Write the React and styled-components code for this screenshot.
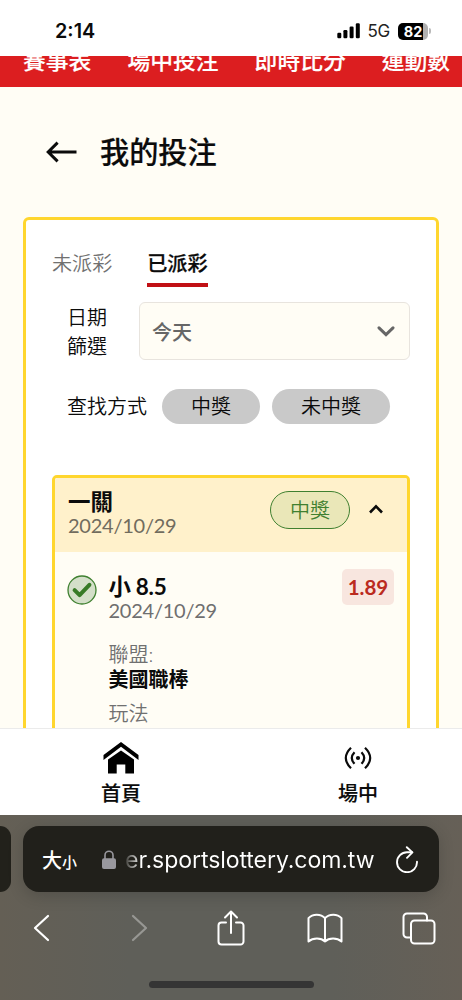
import React, { useState } from 'react';
import styled, { createGlobalStyle } from 'styled-components';

const GlobalStyle = createGlobalStyle`
  * {
    box-sizing: border-box;
  }

  body {
    margin: 0;
    background: #fffdf5;
    font-family: Lato, 'Noto Sans CJK TC', sans-serif;
    color: #0b0b0b;
  }

  button {
    font-family: inherit;
    font-weight: inherit;
    color: inherit;
    background: none;
    border: none;
    padding: 0;
    margin: 0;
  }

  svg {
    display: block;
    flex-shrink: 0;
  }
`;

const Screen = styled.div`
  display: flex;
  flex-direction: column;
  width: 462px;
  height: 1000px;
  overflow: hidden;
`;

// Phone status bar
const StatusBar = styled.header`
  display: flex;
  align-items: center;
  flex-shrink: 0;
  height: 56px;
  padding: 6px 31px 0 55px;
  background: #fff;
  font-family: Inter, sans-serif;
`;

const Clock = styled.span`
  flex: 1;
  font-size: 19.8px;
  font-weight: 600;
  line-height: 24px;
`;

const Network = styled.span`
  margin: 0 8px 0 7px;
  font-size: 17px;
  line-height: 24px;
  letter-spacing: -0.3px;
  color: #222;
`;

const Battery = styled.span`
  display: flex;
  align-items: center;
  justify-content: center;
  width: 30px;
  height: 17px;
  border-radius: 5px;
  background: linear-gradient(90deg, #000 82%, #b1b1b1 82%);
  color: #fff;
  font-size: 14.5px;
  font-weight: 700;
`;

const BatteryTip = styled.span`
  width: 2px;
  height: 6px;
  margin-left: 1px;
  border-radius: 0 2px 2px 0;
  background: #b9b9b9;
`;

// Site menu, scrolled partly under the status bar
const SiteMenu = styled.nav`
  display: flex;
  align-items: flex-end;
  flex-shrink: 0;
  gap: 36px;
  height: 31px;
  padding: 0 0 10px 23px;
  overflow: hidden;
  background: #dc1e20;
  color: #fff;
`;

const SiteLink = styled.span`
  flex-shrink: 0;
  font-size: 22.8px;
  font-weight: 500;
  line-height: 34px;
  -webkit-text-stroke: 0.15px;
`;

const Page = styled.main`
  flex: 1;
  min-height: 0;
  padding: 43px 23px 0;
  overflow: hidden;
  background: #fffdf5;
`;

const TitleRow = styled.div`
  display: flex;
  align-items: center;
  gap: 23px;
  height: 44px;
  margin-bottom: 43px;
  padding-left: 23px;
`;

const Title = styled.h1`
  margin: 0;
  font-size: 29.2px;
  font-weight: 500;
  line-height: 44px;
  -webkit-text-stroke: 0.2px;
`;

const Panel = styled.section`
  height: 640px;
  padding: 23px 26px 0;
  border: 3px solid #ffd62e;
  border-radius: 6px;
  background: #fff;
`;

const Tabs = styled.div`
  display: flex;
  gap: 35px;
`;

const Tab = styled.button`
  font-size: 20.1px;
  font-weight: ${({ $active }) => ($active ? 500 : 350)};
  line-height: 40px;
  color: ${({ $active }) => ($active ? '#0b0b0b' : '#707070')};
  -webkit-text-stroke: ${({ $active }) => ($active ? '0.25px' : '0')};
  border-bottom: 4.5px solid ${({ $active }) => ($active ? '#c11015' : 'transparent')};
`;

const DateRow = styled.div`
  display: flex;
  align-items: center;
  height: 58px;
  margin-top: 15px;
  padding-left: 15px;
`;

const DateLabel = styled.div`
  width: 40px;
  margin-right: 32px;
  padding-top: 1px;
  font-size: 20px;
  font-weight: 350;
  line-height: 28.6px;
`;

const Select = styled.button`
  display: flex;
  flex: 1;
  align-items: center;
  justify-content: space-between;
  height: 58px;
  padding: 0 14px 0 12px;
  border: 1.5px solid #e8e4de;
  border-radius: 6px;
  background: #fffdf5;
  color: #666;
  font-size: 20px;
  font-weight: 500;
`;

const ModeRow = styled.div`
  display: flex;
  align-items: center;
  gap: 12px;
  height: 36px;
  margin-top: 28px;
  padding-left: 15px;
  font-size: 20px;
  font-weight: 350;
`;

const ModeLabel = styled.span`
  margin-right: 3px;
  line-height: 34px;
`;

const Chip = styled.button`
  height: 35px;
  padding: 0 29px;
  border-radius: 18px;
  background: #c9c9c9;
  font-size: 20px;
  line-height: 34px;
`;

const Card = styled.article`
  height: 400px;
  margin-top: 51px;
  overflow: hidden;
  border: 3px solid #ffd62e;
  border-radius: 5px;
  background: #fffdf5;
`;

const CardHead = styled.div`
  display: flex;
  align-items: flex-start;
  height: 74px;
  padding: 13px 24px 0 13px;
  background: #fff1cb;
`;

const Grow = styled.div`
  flex: 1;
`;

const Name = styled.div`
  font-size: 22.5px;
  font-weight: 700;
  line-height: 22px;
`;

const DateText = styled.div`
  font-size: 20px;
  line-height: 25px;
  letter-spacing: -0.25px;
  color: ${({ $color }) => $color || '#6f6f6f'};
`;

const WinBadge = styled.span`
  width: 80px;
  height: 38px;
  margin-right: 19px;
  border: 1.5px solid #3f8030;
  border-radius: 19px;
  background: #eae7b8;
  color: #3f8030;
  font-size: 20px;
  font-weight: 350;
  line-height: 37px;
  text-align: center;
`;

const Toggle = styled.button`
  margin-top: 12.5px;
`;

const Bet = styled.div`
  display: flex;
  align-items: flex-start;
  padding: 17px 13px 0;
`;

const BetIcon = styled.span`
  margin: 6px 11.5px 0 -1px;
`;

const Odds = styled.span`
  width: 52px;
  height: 36px;
  border-radius: 5px;
  background: #f8e6df;
  color: #bb2b1f;
  font-size: 20.5px;
  font-weight: 700;
  line-height: 37px;
  text-align: center;
`;

const Pick = styled(Name)`
  margin-top: 7px;
  letter-spacing: -0.3px;
`;

const Field = styled.dl`
  margin: ${({ $first }) => ($first ? '18px' : '8px')} 0 0;
  font-size: 20px;
  line-height: 26px;
`;

const FieldName = styled.dt`
  color: #707070;
  font-weight: 350;
`;

const FieldValue = styled.dd`
  margin: 0;
  font-weight: 700;
  line-height: 25px;
`;

const BottomNav = styled.nav`
  display: grid;
  grid-template-columns: 242px 1fr;
  flex-shrink: 0;
  height: 87px;
  padding-top: 13px;
  border-top: 1.5px solid #ebebeb;
  background: #fff;
`;

const NavItem = styled.a`
  display: flex;
  flex-direction: column;
  align-items: center;
  padding-left: ${({ $shift }) => $shift || 0}px;
  font-size: 20px;
  font-weight: 500;
  line-height: 34px;
  -webkit-text-stroke: 0.15px;
`;

const NavIcon = styled.span`
  display: flex;
  align-items: center;
  height: 32px;
  margin-bottom: 2px;
`;

// Browser chrome at the bottom
const Browser = styled.footer`
  flex-shrink: 0;
  height: 185px;
  overflow: hidden;
  background: linear-gradient(90deg, #645f55 0%, #5f5f59 28%, #5f5f59 72%, #666057 100%);
`;

const AddressRow = styled.div`
  display: flex;
  gap: 12px;
  padding-top: 11px;
`;

const PreviousTab = styled.div`
  width: 11px;
  height: 66px;
  border-radius: 0 14px 14px 0;
  background: #22211b;
`;

const AddressBar = styled.div`
  display: flex;
  align-items: center;
  width: 416px;
  height: 66px;
  padding: 0 20px 0 19px;
  border-radius: 16px;
  background: #21201b;
  box-shadow: 0 4px 16px rgba(0, 0, 0, 0.16);
  color: #fff;
`;

const TextSize = styled.span`
  display: flex;
  align-items: baseline;
  margin-right: 25px;
  font-size: 20px;
  font-weight: 500;

  & small {
    font-size: 15px;
  }
`;

const Url = styled.span`
  flex: 1;
  margin-left: 9px;
  padding-top: 2px;
  font-family: Inter, sans-serif;
  font-size: 23.1px;
  letter-spacing: -0.1px;
  white-space: nowrap;
  color: transparent;
  background: linear-gradient(90deg, rgba(255, 255, 255, 0.1) 0, #fff 16px);
  background-clip: text;
`;

const Toolbar = styled.div`
  display: grid;
  grid-template-columns: 83px 112px 71px 118px 69px;
  align-items: center;
  justify-items: center;
  height: 40px;
  margin-top: 16px;
`;

const HomeBar = styled.div`
  width: 165px;
  height: 7px;
  margin: 33px auto 0;
  border-radius: 4px;
  background: #353535;
`;

const menu = ['賽事表', '場中投注', '即時比分', '運動數'];
const tabs = ['未派彩', '已派彩'];
const modes = ['中獎', '未中獎'];

const SignalIcon = () => (
  <svg width="24" height="16" viewBox="0 0 24 16">
    <rect x="0.3" y="9.8" width="4" height="5.5" rx="1.2" />
    <rect x="6.4" y="7" width="4" height="8.3" rx="1.2" />
    <rect x="12.6" y="3.6" width="4" height="11.7" rx="1.2" />
    <rect x="18.8" y="0.3" width="4" height="15" rx="1.2" />
  </svg>
);

const BackIcon = () => (
  <svg width="31" height="22" viewBox="0 0 31 22" fill="none" stroke="#0b0b0b" strokeWidth="3">
    <path d="M30.5 11H2.5M11.6 1.6L2.2 11l9.4 9.4" />
  </svg>
);

const DownIcon = () => (
  <svg width="18" height="12" viewBox="0 0 18 12" fill="none" stroke="#666" strokeWidth="3" strokeLinecap="round">
    <path d="M2 2.8l7 6.8 7-6.8" />
  </svg>
);

const UpIcon = () => (
  <svg width="14" height="10" viewBox="0 0 14 10" fill="none" stroke="#0b0b0b" strokeWidth="2.6">
    <path d="M1 8.5l6-6.2 6 6.2" />
  </svg>
);

const WonIcon = () => (
  <svg width="30" height="30" viewBox="0 0 30 30" fill="none">
    <circle cx="15" cy="15" r="14" fill="#d4dfc9" stroke="#3f8030" strokeWidth="1.3" />
    <path d="M7.6 15.2l5 5L22.4 9.8" stroke="#377a26" strokeWidth="4" strokeLinecap="round" strokeLinejoin="round" />
  </svg>
);

const HomeIcon = () => (
  <svg width="36" height="32" viewBox="0 0 36 32">
    <path d="M18 0L35.5 13v5L18 4.8.5 18v-5z" />
    <path d="M18 8.6L31 17.6V31.4h-8.7V22.4h-8.6v9H5V17.6z" />
  </svg>
);

const LiveIcon = () => (
  <svg width="28" height="24" viewBox="0 0 28 24" fill="none" stroke="#0b0b0b" strokeWidth="2.2">
    <circle cx="14" cy="12" r="2.1" fill="#0b0b0b" stroke="none" />
    <path d="M10.5 6.2q-5.4 5.8 0 11.6M17.5 6.2q5.4 5.8 0 11.6" />
    <path d="M7 1.8q-10.4 10.2 0 20.4M21 1.8q10.4 10.2 0 20.4" />
  </svg>
);

const LockIcon = () => (
  <svg width="14" height="19" viewBox="0 0 14 19" fill="none">
    <path d="M3 9V5.2a4 4 0 0 1 8 0V9" stroke="#99989e" strokeWidth="1.6" />
    <rect y="8.2" width="14" height="10.8" rx="2" fill="#99989e" />
  </svg>
);

const ReloadIcon = () => (
  <svg width="23" height="27" viewBox="0 0 23 27" fill="none" stroke="#fff" strokeWidth="1.9" strokeLinecap="round" strokeLinejoin="round">
    <path d="M16 6.2H11.2A10 10 0 1 0 21 15.8" />
    <path d="M10.8 1.2l5.6 5.2-5.4 5.4" />
  </svg>
);

const ToolIcon = styled.svg`
  fill: none;
  stroke: #fff;
  stroke-width: ${({ $width }) => $width || 2};
  stroke-linecap: round;
  stroke-linejoin: round;
  opacity: ${({ $dim }) => ($dim ? 0.35 : 1)};
`;

const App = () => {
  const [activeTab, setActiveTab] = useState('已派彩');

  return (
    <Screen>
      <GlobalStyle />
      <StatusBar>
        <Clock>2:14</Clock>
        <SignalIcon />
        <Network>5G</Network>
        <Battery>82</Battery>
        <BatteryTip />
      </StatusBar>
      <SiteMenu>
        {menu.map((item) => (
          <SiteLink key={item}>{item}</SiteLink>
        ))}
      </SiteMenu>

      <Page>
        <TitleRow>
          <BackIcon />
          <Title>我的投注</Title>
        </TitleRow>
        <Panel>
          <Tabs>
            {tabs.map((tab) => (
              <Tab key={tab} $active={tab === activeTab} onClick={() => setActiveTab(tab)}>
                {tab}
              </Tab>
            ))}
          </Tabs>
          <DateRow>
            <DateLabel>日期篩選</DateLabel>
            <Select>
              今天
              <DownIcon />
            </Select>
          </DateRow>
          <ModeRow>
            <ModeLabel>查找方式</ModeLabel>
            {modes.map((mode) => (
              <Chip key={mode}>{mode}</Chip>
            ))}
          </ModeRow>

          <Card>
            <CardHead>
              <Grow>
                <Name>一關</Name>
                <DateText $color="#716c5e">2024/10/29</DateText>
              </Grow>
              <WinBadge>中獎</WinBadge>
              <Toggle>
                <UpIcon />
              </Toggle>
            </CardHead>
            <Bet>
              <BetIcon>
                <WonIcon />
              </BetIcon>
              <Grow>
                <Pick>小 8.5</Pick>
                <DateText>2024/10/29</DateText>
                <Field $first>
                  <FieldName>聯盟:</FieldName>
                  <FieldValue>美國職棒</FieldValue>
                </Field>
                <Field>
                  <FieldName>玩法</FieldName>
                </Field>
              </Grow>
              <Odds>1.89</Odds>
            </Bet>
          </Card>
        </Panel>
      </Page>

      <BottomNav>
        <NavItem>
          <NavIcon>
            <HomeIcon />
          </NavIcon>
          首頁
        </NavItem>
        <NavItem $shift={12}>
          <NavIcon>
            <LiveIcon />
          </NavIcon>
          場中
        </NavItem>
      </BottomNav>

      <Browser>
        <AddressRow>
          <PreviousTab />
          <AddressBar>
            <TextSize>
              大<small>小</small>
            </TextSize>
            <LockIcon />
            <Url>er.sportslottery.com.tw</Url>
            <ReloadIcon />
          </AddressBar>
        </AddressRow>
        <Toolbar>
          <ToolIcon width="19" height="28" viewBox="0 0 19 28" $width={2.2}>
            <path d="M16 2L3 14l13 12" />
          </ToolIcon>
          <ToolIcon width="19" height="28" viewBox="0 0 19 28" $dim $width={2.2}>
            <path d="M3 2l13 12L3 26" />
          </ToolIcon>
          <ToolIcon width="28" height="36" viewBox="0 0 28 36">
            <path d="M9 12.5H4.5a3 3 0 0 0-3 3v16a3 3 0 0 0 3 3h19a3 3 0 0 0 3-3v-16a3 3 0 0 0-3-3H19" />
            <path d="M14 23V2M8 7.5L14 1.5l6 6" />
          </ToolIcon>
          <ToolIcon width="36" height="30" viewBox="0 0 36 30">
            <path d="M18 5.2C14 .5 5.5 .5 1.5 5.2V28.5C6 24.5 14 24.5 18 28.5C22 24.5 30 24.5 34.5 28.5V5.2C30.5 .5 22 .5 18 5.2V28.5" />
          </ToolIcon>
          <ToolIcon width="34" height="33" viewBox="0 0 34 33">
            <path d="M9 25.5H5A3.5 3.5 0 0 1 1.5 22V5A3.5 3.5 0 0 1 5 1.5h16.5A3.5 3.5 0 0 1 25 5v3.5" />
            <rect x="9" y="8.5" width="23.5" height="23" rx="3.5" />
          </ToolIcon>
        </Toolbar>
        <HomeBar />
      </Browser>
    </Screen>
  );
};

export default App;
